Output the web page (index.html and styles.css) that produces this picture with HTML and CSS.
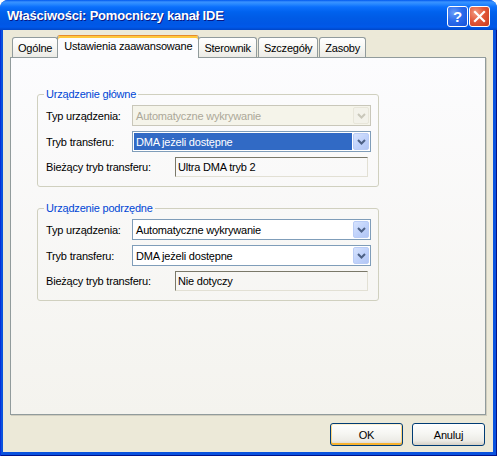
FILE: index.html
```html
<!DOCTYPE html>
<html lang="pl">
<head>
<meta charset="utf-8">
<title>Właściwości: Pomocniczy kanał IDE</title>
<link rel="stylesheet" href="styles.css">
</head>
<body>
<div class="window">
  <div class="titlebar">
    <span class="title">Właściwości: Pomocniczy kanał IDE</span>
    <div class="caption-buttons">
      <button class="cap help">?</button>
      <button class="cap close"><svg width="13" height="13" viewBox="0 0 13 13"><path d="M2 2 L11 11 M11 2 L2 11" stroke="#fff" stroke-width="2.2" stroke-linecap="square" fill="none"/></svg></button>
    </div>
  </div>
  <div class="frame">
    <div class="client">
      <div class="tabs">
        <div class="tab">Ogólne</div>
        <div class="tab active">Ustawienia zaawansowane</div>
        <div class="tab">Sterownik</div>
        <div class="tab">Szczegóły</div>
        <div class="tab">Zasoby</div>
      </div>
      <div class="panel">
        <fieldset class="group">
          <legend>Urządzenie główne</legend>
          <div class="row">
            <span class="label">Typ urządzenia:</span>
            <div class="combo disabled"><span class="value">Automatyczne wykrywanie</span><span class="drop"><svg width="9" height="6" viewBox="0 0 9 6"><path d="M1 1 L4.5 4.5 L8 1" stroke-width="2" fill="none"/></svg></span></div>
          </div>
          <div class="row">
            <span class="label">Tryb transferu:</span>
            <div class="combo focused"><span class="value">DMA jeżeli dostępne</span><span class="drop"><svg width="9" height="6" viewBox="0 0 9 6"><path d="M1 1 L4.5 4.5 L8 1" stroke-width="2" fill="none"/></svg></span></div>
          </div>
          <div class="row current">
            <span class="label">Bieżący tryb transferu:</span>
            <div class="static">Ultra DMA tryb 2</div>
          </div>
        </fieldset>
        <fieldset class="group second">
          <legend>Urządzenie podrzędne</legend>
          <div class="row">
            <span class="label">Typ urządzenia:</span>
            <div class="combo"><span class="value">Automatyczne wykrywanie</span><span class="drop"><svg width="9" height="6" viewBox="0 0 9 6"><path d="M1 1 L4.5 4.5 L8 1" stroke-width="2" fill="none"/></svg></span></div>
          </div>
          <div class="row">
            <span class="label">Tryb transferu:</span>
            <div class="combo"><span class="value">DMA jeżeli dostępne</span><span class="drop"><svg width="9" height="6" viewBox="0 0 9 6"><path d="M1 1 L4.5 4.5 L8 1" stroke-width="2" fill="none"/></svg></span></div>
          </div>
          <div class="row current">
            <span class="label">Bieżący tryb transferu:</span>
            <div class="static">Nie dotyczy</div>
          </div>
        </fieldset>
      </div>
      <div class="buttons">
        <button class="btn default">OK</button>
        <button class="btn">Anuluj</button>
      </div>
    </div>
  </div>
</div>
</body>
</html>
```

FILE: styles.css
```css
* { box-sizing: border-box; }
html, body { margin: 0; padding: 0; background: #ffffff; }
body {
  font-family: "Liberation Sans", Arial, sans-serif;
  font-size: 11px;
  letter-spacing: -0.2px;
  color: #000;
}
.window {
  width: 497px;
  height: 456px;
  display: flex;
  flex-direction: column;
  border-radius: 8px 8px 0 0;
  overflow: hidden;
  background: #0A52DE;
}
.titlebar {
  height: 30px;
  flex: none;
  display: flex;
  align-items: center;
  padding: 0 7px 0 7px;
  background: linear-gradient(180deg, #0058EE 0px, #3A93FF 2px, #2889FF 4px, #0B6FFC 7px, #0062EE 12px, #005BE6 18px, #0057E5 24px, #0059EA 27px, #0046C8 30px);
}
.title {
  flex: 1;
  color: #fff;
  font-family: "Liberation Sans", Arial, sans-serif;
  font-weight: bold;
  font-size: 13px;
  letter-spacing: -0.2px;
  text-shadow: 1px 1px 0 #0A1883;
}
.caption-buttons {
  display: flex;
  gap: 1px;
  margin-top: 3px;
}
.cap {
  width: 21px;
  height: 21px;
  padding: 0;
  margin: 0;
  border: 1px solid #fff;
  border-radius: 3px;
  display: flex;
  align-items: center;
  justify-content: center;
  color: #fff;
  font-family: "Liberation Sans", Arial, sans-serif;
  font-weight: bold;
  font-size: 15px;
  line-height: 1;
}
.help {
  background: radial-gradient(circle at 30% 30%, #6A9CF8 0, #2A6BEC 45%, #1450D8 100%);
}
.close {
  background: radial-gradient(circle at 30% 30%, #F39A80 0, #E2583A 45%, #C93A1E 100%);
}
.frame {
  flex: 1;
  display: flex;
  padding: 0 4px 4px 3px;
  background: #0A52DE;
  box-shadow: inset 1px 0 0 #0831D9, inset -1px 0 0 #00138C, inset 0 -1px 0 #00138C;
}
.client {
  flex: 1;
  background: #ECE9D8;
  display: flex;
  flex-direction: column;
}
.tabs {
  display: flex;
  align-items: flex-end;
  height: 27px;
  flex: none;
  padding-left: 9px;
  position: relative;
  z-index: 1;
}
.tab {
  height: 20px;
  padding: 0 5px;
  border: 1px solid #919B9C;
  border-bottom: 0;
  border-radius: 3px 3px 0 0;
  background: linear-gradient(180deg, #FFFFFF 0, #F7F7F3 50%, #ECEBE6 100%);
  display: flex;
  align-items: center;
  margin-right: 1px;
  white-space: nowrap;
}
.tab.active {
  height: 23px;
  margin: 0 -1px -1px -2px;
  padding: 0 6px 3px 6px;
  border-top: 1px solid #E68B2C;
  box-shadow: inset 0 2px 0 #FFC83C;
  background: #FCFCFE;
}
.panel {
  flex: none;
  margin-left: 7px;
  width: 476px;
  height: 358px;
  border: 1px solid #919B9C;
  box-shadow: 1px 1px 0 #D0CDBE;
  background: linear-gradient(180deg, #FCFCFE 0, #F4F3EE 100%);
  padding-top: 30px;
}
.group {
  margin: 0 0 0 26px;
  padding: 4px 6px 9px 8px;
  width: 342px;
  min-width: 0;
  border: 1px solid #D0D0BF;
  border-radius: 3px;
}
.group.second { margin-top: 15px; }
.group legend {
  padding: 0 2px;
  margin-left: -2px;
  color: #0046D5;
  line-height: 13px;
}
.row {
  display: flex;
  align-items: center;
  height: 21px;
  margin-bottom: 5px;
}
.row.current { height: 20px; margin-bottom: 0; }
.label { width: 86px; flex: none; }
.row.current .label { width: 129px; }
.combo {
  width: 239px;
  height: 21px;
  border: 1px solid #7F9DB9;
  background: #fff;
  display: flex;
  padding: 1px;
}
.combo .value {
  flex: 1;
  display: flex;
  align-items: center;
  padding-left: 2px;
  white-space: nowrap;
  overflow: hidden;
}
.combo.focused .value {
  background: #316AC5;
  color: #fff;
  margin-right: 1px;
}
.drop {
  width: 16px;
  height: 17px;
  flex: none;
  border: 1px solid #B9CCF6;
  border-radius: 2px;
  background: linear-gradient(135deg, #D7E3FD 0, #C1D3FB 50%, #B2C6F4 100%);
  display: flex;
  align-items: center;
  justify-content: center;
}
.drop svg path { stroke: #4D6185; }
.combo.disabled {
  border-color: #C9C7BA;
  background: #F5F4EA;
  color: #ACA899;
}
.combo.disabled .drop {
  border-color: #E8E6DA;
  background: #F3F2EA;
}
.combo.disabled .drop svg path { stroke: #C9C7BA; }
.static {
  width: 193px;
  height: 20px;
  border: 1px solid;
  border-color: #7A7869 #E2E0D4 #E2E0D4 #7A7869;
  padding-left: 2px;
  display: flex;
  align-items: center;
}
.buttons {
  display: flex;
  justify-content: flex-end;
  gap: 9px;
  margin-top: 8px;
  padding-right: 8px;
}
.btn {
  width: 73px;
  height: 23px;
  margin: 0;
  padding: 0;
  border: 1px solid #003C74;
  border-radius: 3px;
  background: linear-gradient(180deg, #FFFFFF 0, #F6F6F2 45%, #ECEBE6 80%, #D6D0C5 100%);
  font-family: "Liberation Sans", Arial, sans-serif;
  font-size: 11px;
  letter-spacing: -0.2px;
  color: #000;
}
.btn.default {
  box-shadow: inset 0 1px 0 #FFF0CF, inset 0 -2px 0 #F8B330, inset 1px 0 0 #FCD57E, inset -1px 0 0 #FCD57E;
}
```
